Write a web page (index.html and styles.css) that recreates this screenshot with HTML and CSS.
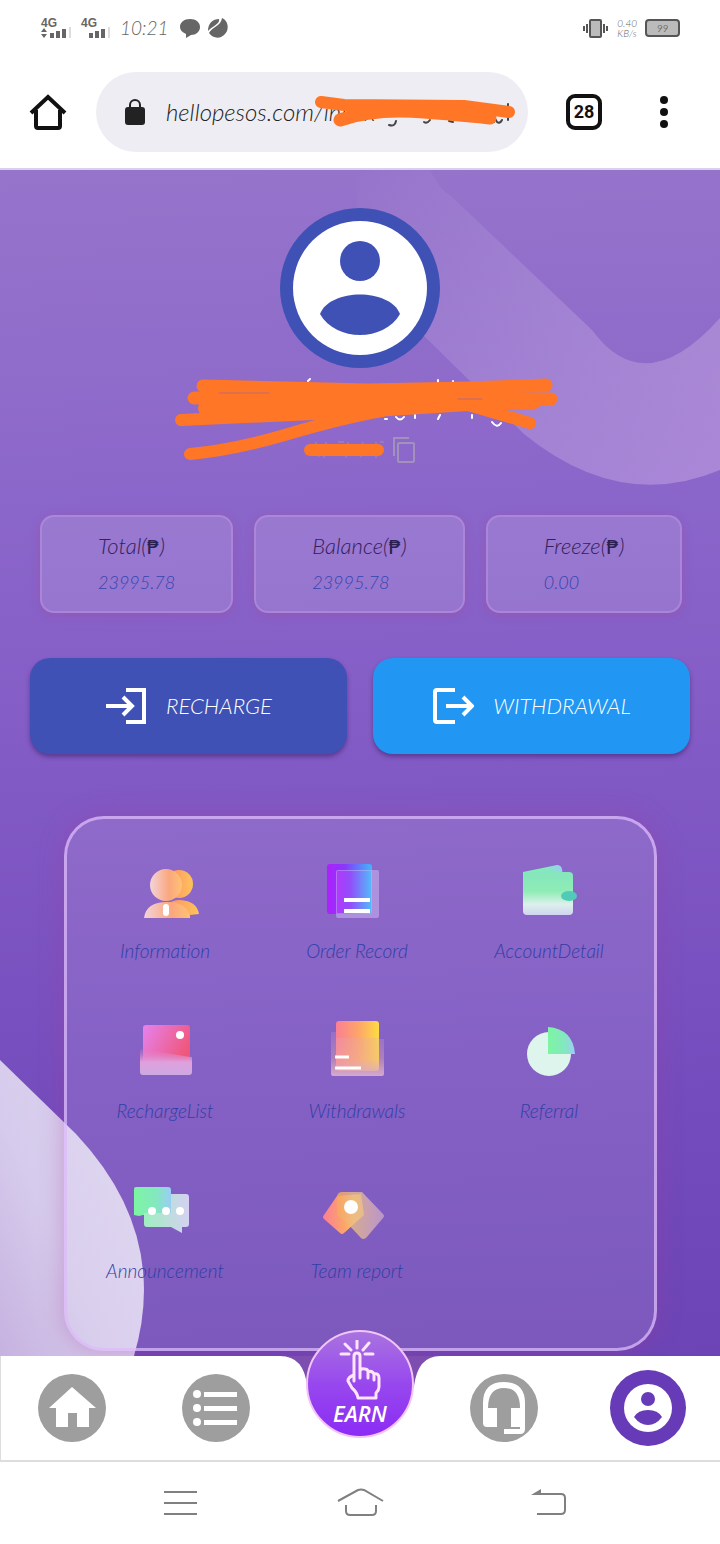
FILE: index.html
```
<!DOCTYPE html>
<html lang="en">
<head>
    <meta charset="utf-8">
    <meta name="viewport" content="width=device-width, initial-scale=1">
    <title>hellopesos.com</title>
    <link rel="stylesheet" href="styles.css">
</head>
<body>
<div class="status">
    <div class="status-group">
        <svg width="32" height="24" viewBox="0 0 32 24" fill="#666"><text class="net" x="1" y="11">4G</text><path d="M1 16l3-4 3 4zM1 18h6l-3 4zM10 17h4v5h-4zM16 15h4v7h-4zM22 13h4v9h-4z"/><path d="M29 11h2v11h-2z" fill="#ddd"/></svg>
        <svg width="32" height="24" viewBox="0 0 32 24" fill="#666"><text class="net" x="1" y="11">4G</text><path d="M9 17h4v5H9zM15 15h4v7h-4zM21 13h4v9h-4z"/><path d="M28 11h2v11h-2z" fill="#ddd"/></svg>
        <span class="time">10:21</span>
        <svg width="20" height="20" viewBox="0 0 20 20" fill="#666"><path d="M10 1c6 0 10 3.500 10 8s-4 8-9 8l-5 3 0-4C2 14 0 12 0 9c0-4.500 4-8 10-8z"/></svg>
        <svg width="20" height="20" viewBox="0 0 20 20" fill="#666"><path d="M0 13C0 5 5 1 11 1c1 5-5 6-11 12zM14 0c7 3 7 12 3 16-4 5-12 5-16-1C4 9 13 8 14 0z"/></svg>
    </div>
    <div class="status-group">
        <svg width="26" height="20" viewBox="0 0 26 20" fill="none" stroke="#555" stroke-width="2"><rect x="7" y="2" width="11" height="17" rx="1" fill="#bbb"/><path d="M4 6v9M1 8v5M21 6v9M24 8v5"/></svg>
        <span class="speed">0.40<br>KB/s</span>
        <span class="battery">99</span>
    </div>
</div>

<div class="browser">
    <button class="plain" aria-label="Home"><svg width="38" height="38" viewBox="0 0 38 38" fill="none" stroke="#111" stroke-width="4"><path d="M2 20L19 4l17 16M7 17v16q0 2 2 2h20q2 0 2-2V17"/></svg></button>
    <div class="address">
        <svg width="22" height="28" viewBox="0 0 22 28"><path d="M6 11V7a5 5 0 0 1 10 0v4" fill="none" stroke="#222" stroke-width="2"/><rect x="1" y="9" width="20" height="18" rx="3" fill="#222"/></svg>
        <input class="url" type="text" aria-label="Address" value="hellopesos.com/index">
        <svg class="url-mark" width="204" height="36" viewBox="0 0 204 36" fill="none" stroke="#ff7626" stroke-linecap="round" stroke-linejoin="round"><path d="M82 27q-1 6-7 4M110 28q3 2 6-2M135 27l4 1M180 28q1-5 3 0 3 2 5-2M194 10v16" stroke="#444" stroke-width="2"/><path d="M7 8L30 11 150 12 195 18" stroke-width="12"/><path d="M26 26Q60 14 110 18T176 24" stroke-width="13"/></svg>
    </div>
    <button class="tabs-count" aria-label="Open tabs">28</button>
    <button class="plain more" aria-label="More"><svg width="10" height="34" viewBox="0 0 10 34" fill="#111"><circle cx="5" cy="5" r="4"/><circle cx="5" cy="17" r="4"/><circle cx="5" cy="29" r="4"/></svg></button>
</div>

<main class="app">
    <svg class="waves" viewBox="0 0 720 1186" preserveAspectRatio="none" aria-hidden="true">
        <defs>
            <linearGradient id="swoosh" x1="0" y1="0" x2="1" y2="1"><stop offset="0" stop-color="#fff" stop-opacity="0"/><stop offset="1" stop-color="#e8c8f0" stop-opacity=".34"/></linearGradient>
            <linearGradient id="blob" x1="1" y1="0" x2="0" y2="1"><stop offset="0" stop-color="#dcd3f0"/><stop offset=".6" stop-color="#d6cbec"/><stop offset="1" stop-color="#c6b2e0"/></linearGradient>
        </defs>
        <path d="M355 0H430Q438 18 452 27L592 160Q645 232 720 148V300Q620 342 524 264L420 162Q355 90 355 0Z" fill="url(#swoosh)"/>
        <path d="M0 890L76 964Q170 1064 134 1186H0Z" fill="url(#blob)"/>
    </svg>

    <section class="profile">
        <svg class="avatar" viewBox="0 0 160 160"><circle cx="80" cy="80" r="80" fill="#3f51b5"/><circle cx="80" cy="80" r="67" fill="#fff"/><circle cx="80" cy="53" r="20" fill="#3f51b5"/><path d="M40 106C50 80 110 80 120 106 104 134 56 134 40 106z" fill="#3f51b5"/></svg>
        <svg class="name" viewBox="0 0 384 90" fill="none" stroke="#ff7626" stroke-linecap="round" stroke-linejoin="round">
            <path d="M38 28l-3 8M140 9l2-2M270 11v-3M285 12v-3M217 47h2M228 45q4 5 8 0M247 46v-3M270 47l2-4M304 46v-3M324 50q5 7 9 1" stroke="#fff" stroke-width="2"/>
            <path d="M35 14L200 18 300 16 378 13" stroke-width="13"/>
            <path d="M26 26L190 25 383 27" stroke-width="13"/>
            <path d="M38 36L120 31 366 29" stroke-width="16"/>
            <path d="M13 48L190 40 300 33 362 51" stroke-width="12"/>
            <path d="M22 82Q66 78 120 62T214 39" stroke-width="12"/>
            <path d="M51 21h50M290 27h24" stroke="#b96a78" stroke-width="1"/>
        </svg>
        <div class="uid">
            <svg width="80" height="22" viewBox="0 0 80 22"><path d="M12 3l3 15M22 3l-2 16M34 3h6M44 3l-2 16M58 3q6 8-2 15M72 3v16M76 3h4" fill="none" stroke="#9b7abb" stroke-width="2"/><path d="M6 11L74 11" stroke="#ff7626" stroke-width="12" stroke-linecap="round"/></svg>
            <button class="plain" aria-label="Copy"><svg width="24" height="28" viewBox="0 0 24 28" fill="none" stroke="#a291bd" stroke-width="2"><path d="M2 20V2h15"/><rect x="6" y="7" width="16" height="19" rx="1"/></svg></button>
        </div>
    </section>

    <section class="stats">
        <div class="stat">Total(<b>₱</b>)<span>23995.78</span></div>
        <div class="stat">Balance(<b>₱</b>)<span>23995.78</span></div>
        <div class="stat">Freeze(<b>₱</b>)<span>0.00</span></div>
    </section>

    <div class="actions">
        <button class="action recharge"><svg width="42" height="38" viewBox="0 0 42 38" fill="none" stroke="#fff" stroke-width="4"><path d="M1 19h26M18 10l9 9-9 9M21 3h18v32H21"/></svg>RECHARGE</button>
        <button class="action withdrawal"><svg width="42" height="38" viewBox="0 0 42 38" fill="none" stroke="#fff" stroke-width="4"><path d="M14 19h26M31 10l9 9-9 9M23 3H5q-2 0-2 2v28q0 2 2 2h18"/></svg>WITHDRAWAL</button>
    </div>

    <nav class="menu">
        <svg class="defs" width="0" height="0" aria-hidden="true"><defs>
            <linearGradient id="peach"><stop offset="0" stop-color="#f3d3da"/><stop offset=".6" stop-color="#fba77c"/><stop offset="1" stop-color="#ffc276"/></linearGradient>
            <linearGradient id="orange"><stop offset="0" stop-color="#f98a68"/><stop offset="1" stop-color="#ffc35a"/></linearGradient>
            <linearGradient id="bluish"><stop offset="0" stop-color="#ae20fb"/><stop offset=".4" stop-color="#8938fb"/><stop offset="1" stop-color="#3fb8fb"/></linearGradient>
            <linearGradient id="mint"><stop offset="0" stop-color="#7df5a2"/><stop offset=".6" stop-color="#83e8bf"/><stop offset="1" stop-color="#9bcdf6"/></linearGradient>
            <linearGradient id="mintfade" x2="0" y2="1"><stop offset="0" stop-color="#85e5bd"/><stop offset=".45" stop-color="#8eedb5"/><stop offset=".75" stop-color="#ddf0ec"/><stop offset="1" stop-color="#cfd5f0"/></linearGradient>
            <linearGradient id="pink" y2=".5"><stop offset="0" stop-color="#e682ee"/><stop offset="1" stop-color="#f05679"/></linearGradient>
            <linearGradient id="pinkfade" x2="0" y2="1"><stop offset="0" stop-color="#e477c0" stop-opacity=".1"/><stop offset=".5" stop-color="#dfa0dc"/><stop offset="1" stop-color="#cba9e3"/></linearGradient>
            <linearGradient id="sun"><stop offset="0" stop-color="#fb7f94"/><stop offset=".5" stop-color="#fda36b"/><stop offset="1" stop-color="#ffdb43"/></linearGradient>
            <linearGradient id="sunfade" x2="0" y2="1"><stop offset="0" stop-color="#d9a5c8" stop-opacity=".2"/><stop offset=".6" stop-color="#eab0a8" stop-opacity=".4"/><stop offset="1" stop-color="#d4a8d0"/></linearGradient>
            <linearGradient id="frost"><stop offset="0" stop-color="#9ff0c0"/><stop offset="1" stop-color="#d5d0f2"/></linearGradient>
            <linearGradient id="sand"><stop offset="0" stop-color="#f9a85b"/><stop offset=".35" stop-color="#eabc8a"/><stop offset="1" stop-color="#c8a4cf"/></linearGradient>
        </defs></svg>
        <a href="#information"><svg viewBox="0 0 64 64"><circle cx="46" cy="25" r="14" fill="url(#orange)"/><path d="M30 59q0-18 17-18 17 1 19 14l-9 1v3z" fill="url(#orange)"/><circle cx="33" cy="26" r="16" fill="url(#peach)"/><path d="M11 59q2-16 23-16 21 0 23 16z" fill="url(#peach)"/><rect x="30" y="45" width="6" height="12" rx="3" fill="#fff"/></svg>Information</a>
        <a href="#orders"><svg viewBox="0 0 64 64"><rect x="2" y="5" width="45" height="50" rx="3" fill="url(#bluish)"/><rect x="11" y="11" width="43" height="48" rx="2" fill="#cfbbf5" opacity=".5"/><rect x="12" y="12" width="34" height="42" fill="url(#bluish)" opacity=".7"/><path d="M19 41h26M19 52h26" stroke="#fff" stroke-width="4"/></svg>Order Record</a>
        <a href="#account"><svg viewBox="0 0 64 64"><path d="M6 13L40 6q4 0 5 4l1 8-40 6z" fill="url(#mint)"/><rect x="6" y="13" width="50" height="43" rx="4" fill="url(#mintfade)"/><ellipse cx="52" cy="37" rx="8" ry="5" fill="#50cbb7"/></svg>AccountDetail</a>
        <a href="#recharges"><svg viewBox="0 0 64 64"><rect x="10" y="6" width="47" height="44" rx="3" fill="url(#pink)"/><path d="M7 30h3l47 8h2v15q0 3-3 3H10q-3 0-3-3z" fill="url(#pinkfade)"/><circle cx="47" cy="16" r="4" fill="#fff"/></svg>RechargeList</a>
        <a href="#withdrawals"><svg viewBox="0 0 64 64"><rect x="11" y="2" width="43" height="50" rx="3" fill="url(#sun)"/><path d="M6 13h5v6h43v1h5v35q0 2-2 2H8q-2 0-2-2z" fill="url(#sunfade)"/><path d="M10 38h14M10 49h26" stroke="#fff" stroke-width="3"/></svg>Withdrawals</a>
        <a href="#referral"><svg viewBox="0 0 64 64"><circle cx="32" cy="35" r="22" fill="#def5ed"/><path d="M31 8q25 2 27 27H31z" fill="url(#mint)"/></svg>Referral</a>
        <a href="#announcement"><svg viewBox="0 0 64 64"><path d="M3 8h32q3 0 3 3v25H10l-4 1-5-1V10q0-2 2-2z" fill="url(#mint)"/><path d="M38 15h15q3 0 3 3v27q0 3-3 3h-4v6l-11-6H14q-3 0-3-3V34H38z" fill="url(#frost)"/><g fill="#fff"><circle cx="19" cy="32" r="4"/><circle cx="33" cy="32" r="4"/><circle cx="47" cy="32" r="4"/></g></svg>Announcement</a>
        <a href="#team"><svg viewBox="0 0 64 64"><path d="M12 17L36 15 39 36 19 54q-2 2-4 0L-1 40q-2-2 0-4z" fill="url(#sun)"/><path d="M12 17q1-4 5-4l20 0 21 22q2 2 0 4L41 59q-3 2-5 0L24 46 12 36z" fill="url(#sand)" opacity=".8"/><circle cx="26" cy="28" r="7" fill="#fff"/></svg>Team report</a>
    </nav>
</main>

<nav class="tabbar">
    <svg class="notch" width="160" height="56" viewBox="0 0 160 56"><path d="M0 0Q24 0 27 30L40 56H120L134 30Q138 0 160 0Z" fill="#7d4daf"/></svg>
    <a href="#home" aria-label="Home"><svg width="68" height="68" viewBox="0 0 68 68"><circle cx="34" cy="34" r="34" fill="#9e9e9e"/><path d="M34 13L58 34H51V53H39V39H30V53H18V34H11z" fill="#fff"/></svg></a>
    <a href="#list" aria-label="List"><svg width="68" height="68" viewBox="0 0 68 68"><circle cx="34" cy="34" r="34" fill="#9e9e9e"/><g fill="#fff"><circle cx="15" cy="20" r="4"/><circle cx="15" cy="34" r="4"/><circle cx="15" cy="48" r="4"/><path d="M22 18h33v5H22zM22 32h33v5H22zM22 46h33v5H22z"/></g></svg></a>
    <a class="earn" href="#earn"><svg width="52" height="60" viewBox="0 0 52 60" fill="none" stroke="#ffe4fa" stroke-width="3" stroke-linecap="round" stroke-linejoin="round"><path d="M20 41V16q0-3 3-3t3 3v15q1-3 5-2 3 0 3 3 4-2 6 2 5-1 5 4v9q0 3-3 6v5H24q-1-6-6-10l-4-7q0-4 6-6M26 31v7M34 32v6M40 34v6M23 1v7M7 14h8M31 14h8M11 4l6 6M35 3l-6 7"/></svg>EARN</a>
    <a href="#support" aria-label="Support"><svg width="68" height="68" viewBox="0 0 68 68"><circle cx="34" cy="34" r="34" fill="#9e9e9e"/><path d="M13 49V29Q13 8 34 8T55 29V55Q55 60 50 60H34V55H50V53H41V34H50Q50 14 34 14T18 34H27V53H17Q13 53 13 49z" fill="#fff"/></svg></a>
    <a href="#me" aria-label="Profile"><svg width="76" height="76" viewBox="0 0 76 76"><circle cx="38" cy="38" r="38" fill="#673ab7"/><circle cx="38" cy="38" r="24" fill="#fff"/><circle cx="38" cy="29" r="7" fill="#673ab7"/><path d="M24 47q4-7 14-7t14 7q-6 8-14 8t-14-8z" fill="#673ab7"/></svg></a>
</nav>

<div class="system">
    <button class="plain" aria-label="Recent apps"><svg width="46" height="34" viewBox="0 0 46 34" stroke="#808080" stroke-width="2"><path d="M12 6h33M12 17h33M12 28h33"/></svg></button>
    <button class="plain" aria-label="Home screen"><svg width="48" height="34" viewBox="0 0 48 34" fill="none" stroke="#808080" stroke-width="2"><path d="M2 15L22 4q3-1 6 0L47 15M10 19v6q0 4 4 4h22q4 0 4-4v-6"/></svg></button>
    <button class="plain" aria-label="Back"><svg width="46" height="34" viewBox="0 0 46 34" fill="none" stroke="#808080" stroke-width="2"><path d="M12 8h27q4 0 4 4v12q0 4-4 4H15"/><path d="M9 9l10-6v6z" fill="#808080" stroke="none"/></svg></button>
</div>
</body>
</html>
```

FILE: styles.css
```
* {
    box-sizing: border-box;
}
body {
    margin: 0;
    background: #fff;
    font-family: Lato, "Liberation Sans", sans-serif;
    font-size: 19px;
    font-style: italic;
    font-weight: 300;
    font-variant-ligatures: none;
    line-height: 26px;
}
svg {
    display: block;
    flex: none;
}
button {
    font: inherit;
    border: 0;
    padding: 0;
    cursor: pointer;
}
a {
    text-decoration: none;
}
.plain {
    background: none;
}

/* phone status bar */
.status {
    display: flex;
    justify-content: space-between;
    align-items: center;
    height: 56px;
    padding: 0 40px;
    color: #666;
}
.status-group {
    display: flex;
    align-items: center;
    gap: 8px;
}
.net {
    font-family: "Liberation Sans", sans-serif;
    font-size: 12px;
    font-style: normal;
    font-weight: bold;
}
.time {
    min-width: 52px;
}
.speed {
    font-size: 10px;
    line-height: 10px;
}
.battery {
    width: 35px;
    border: 2px solid #555;
    border-radius: 4px;
    background: #bbb;
    color: #444;
    font-size: 10px;
    line-height: 14px;
    text-align: center;
}

/* browser bar */
.browser {
    display: flex;
    align-items: center;
    padding: 16px 51px 16px 29px;
    border-bottom: 2px solid #d8d0f0;
}
.address {
    position: relative;
    display: flex;
    flex: 1;
    align-items: center;
    gap: 20px;
    height: 80px;
    margin: 0 38px 0 29px;
    padding: 0 28px;
    border-radius: 40px;
    background: #ededf3;
}
.url {
    flex: 1;
    min-width: 0;
    padding: 0;
    border: 0;
    background: none;
    color: #222;
    font: inherit;
    font-size: 24px;
}
.url-mark {
    position: absolute;
    right: 10px;
    top: 22px;
}
.tabs-count {
    width: 36px;
    height: 36px;
    border: 4px solid #111;
    border-radius: 9px;
    background: #fff;
    color: #111;
    font-family: Roboto, sans-serif;
    font-size: 18px;
    font-style: normal;
    font-weight: bold;
}
.more {
    margin-left: 57px;
}

/* account page */
.app {
    position: relative;
    padding: 38px 30px 5px;
    background: linear-gradient(178deg, #9674cb 0%, #8b66ca 28%, #825ac5 50%, #754cbd 78%, #6c44b5 100%);
}
.waves {
    position: absolute;
    left: 0;
    top: 0;
    width: 100%;
    height: 100%;
}
.profile, .stats, .actions, .menu {
    position: relative;
}
.profile {
    display: flex;
    flex-direction: column;
    align-items: center;
}
.avatar {
    width: 160px;
}
.name {
    position: absolute;
    top: 164px;
    width: 384px;
    height: 90px;
    overflow: visible;
}
.uid {
    display: flex;
    align-items: center;
    gap: 8px;
    margin-top: 68px;
}
.stats {
    display: flex;
    gap: 21px;
    margin: 51px 10px 0;
}
.stat {
    flex: auto;
    padding: 11px 56px;
    border: 2px solid rgba(190, 150, 225, .5);
    border-radius: 14px;
    background: rgba(255, 255, 255, .13);
    box-shadow: 0 2px 8px rgba(170, 70, 150, .35);
    color: #33205c;
    font-size: 22px;
    line-height: 36px;
    white-space: nowrap;
}
.stat b {
    font-family: "DejaVu Sans", sans-serif;
    font-size: 20px;
    font-style: normal;
    line-height: 28px;
    color: #2c2050;
}
.stat span {
    display: block;
    color: #3445b0;
    font-size: 18px;
}
.actions {
    display: flex;
    gap: 26px;
    margin-top: 45px;
}
.action {
    display: flex;
    flex: 1;
    justify-content: center;
    align-items: center;
    gap: 19px;
    height: 96px;
    border-radius: 20px;
    box-shadow: 0 3px 4px rgba(50, 30, 100, .5);
    color: #fff;
    font-size: 22px;
}
.recharge {
    background: #3f51b5;
}
.withdrawal {
    background: #2196f3;
}
.menu {
    display: grid;
    grid-template-columns: repeat(3, 1fr);
    row-gap: 55px;
    margin: 62px 33px 0 34px;
    padding: 40px 9px 64px 2px;
    border: 3px solid rgba(220, 185, 250, .75);
    border-radius: 40px;
    background: rgba(255, 255, 255, .11);
    box-shadow: 0 0 24px rgba(160, 60, 150, .35);
}
.menu .defs {
    position: absolute;
    width: 0;
    height: 0;
}
.menu a {
    display: flex;
    flex-direction: column;
    align-items: center;
    gap: 15px;
    color: #303fa4;
}
.menu a svg {
    width: 64px;
    height: 64px;
    overflow: visible;
}

/* bottom tabs */
.tabbar {
    position: relative;
    display: grid;
    grid-template-columns: repeat(5, 1fr);
    align-items: center;
    justify-items: center;
    height: 106px;
    border-bottom: 2px solid #ddd;
    background: #fff;
    box-shadow: inset 1px 0 #ddd;
}
.notch {
    position: absolute;
    left: 50%;
    top: 0;
    margin-left: -80px;
}
.earn {
    position: relative;
    display: flex;
    flex-direction: column;
    align-items: center;
    align-self: start;
    width: 108px;
    height: 108px;
    margin-top: -26px;
    padding-top: 8px;
    border: 2px solid #f3c4f8;
    border-radius: 50%;
    background: linear-gradient(#a873e0, #9848ee 50%, #8b2bf5);
    color: #fff;
    font-family: "Open Sans", sans-serif;
    font-size: 22px;
    font-weight: 600;
    line-height: 26px;
}

/* phone navigation */
.system {
    display: grid;
    grid-template-columns: repeat(3, 1fr);
    justify-items: center;
    padding: 24px 82px;
}
```
